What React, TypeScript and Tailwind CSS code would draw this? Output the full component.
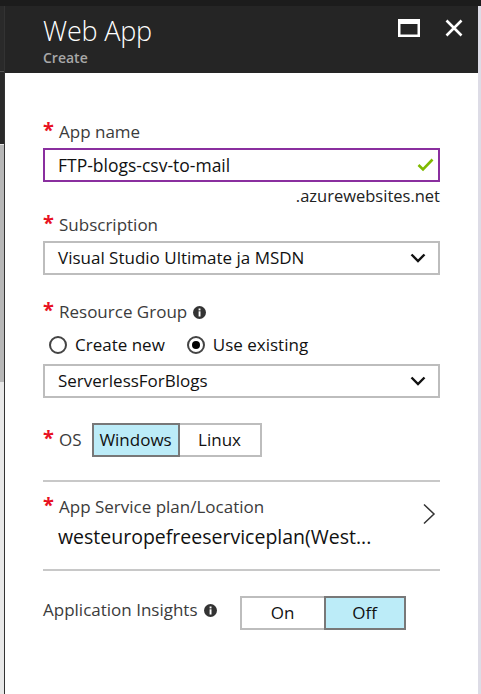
import React from "react";

const font = { fontFamily: '"Segoe UI", "Open Sans", "Noto Sans", sans-serif' };

function Star() {
  return (
    <span className="text-[#e81123] text-[20px] leading-none w-[16px] inline-block font-bold -mt-[4px]">*</span>
  );
}

function Chevron() {
  return (
    <svg width="16" height="10" viewBox="0 0 16 10" className="shrink-0">
      <polyline points="1.5,1.5 8,8 14.5,1.5" fill="none" stroke="#111" strokeWidth="2.4" />
    </svg>
  );
}

function Info() {
  return (
    <span className="inline-flex w-[13px] h-[13px] rounded-full bg-[#333] items-center justify-center shrink-0">
      <svg width="13" height="13" viewBox="0 0 13 13">
        <rect x="5.6" y="2.5" width="1.9" height="1.9" fill="#fff" />
        <rect x="5.6" y="5.3" width="1.9" height="5.2" fill="#fff" />
      </svg>
    </span>
  );
}

function Radio({ checked }: { checked?: boolean }) {
  return (
    <span className="w-[18px] h-[18px] rounded-full border-2 border-[#444] flex items-center justify-center shrink-0 bg-white">
      {checked && <span className="w-[8px] h-[8px] rounded-full bg-black" />}
    </span>
  );
}

export default function App() {
  return (
    <div className="w-[481px] h-[694px] bg-white flex flex-col overflow-hidden" style={font}>
      <div className="h-[6px] bg-[#1c1c1c] shrink-0" />
      <div className="flex flex-1">
        <div className="w-[5px] flex flex-col shrink-0 border-r border-[#333]">
          <div className="h-[66px] bg-[#2a2a2a] border-b border-[#555]" />
          <div className="h-[72px] bg-[#2a2a2a]" />
          <div className="h-[238px] bg-[#b7b7b7] border-t border-[#e8e8e8]" />
          <div className="flex-1 bg-[#e8e8e8]" />
        </div>
        <div className="flex-1 flex flex-col">
          <div className="h-[67px] bg-[#252525] pl-[38px] pr-[15px] flex items-start">
            <div className="flex-1 flex flex-col">
              <div className="text-white text-[27px] font-light leading-[26px] mt-[12px] tracking-[-0.2px]">Web App</div>
              <div className="text-[#a8a8a8] text-[14px] font-semibold leading-[18px] mt-[5px]">Create</div>
            </div>
            <div className="flex items-center gap-[25px] mt-[13px]">
              <svg width="22" height="18" viewBox="0 0 22 18">
                <rect x="1.25" y="1.25" width="19.5" height="15.5" fill="none" stroke="#fff" strokeWidth="2.5" />
                <rect x="1" y="1" width="20" height="4" fill="#fff" />
              </svg>
              <svg width="18" height="18" viewBox="0 0 18 18">
                <path d="M1.5 1.5 L16.5 16.5 M16.5 1.5 L1.5 16.5" stroke="#fff" strokeWidth="2.6" />
              </svg>
            </div>
          </div>

          <div className="flex flex-col px-[38px] pt-[47px]">
            <div className="h-[24px] flex items-center text-[17px] text-[#3b3b3b]">
              <Star />
              <span>App name</span>
            </div>
            <div className="mt-[4px] h-[34px] border-2 border-[#8a2f9f] flex items-center pl-[13px] pr-[4px] text-[17.5px] text-[#111]">
              <span className="flex-1">FTP-blogs-csv-to-mail</span>
              <svg width="17" height="14" viewBox="0 0 17 14">
                <polyline points="1.5,7 6,11.5 15.5,1.5" fill="none" stroke="#7fba00" strokeWidth="2.6" />
              </svg>
            </div>
            <div className="mt-[3px] h-[22px] text-right text-[16.5px] leading-[22px] text-[#222]">.azurewebsites.net</div>

            <div className="mt-[6px] h-[24px] flex items-center text-[17px] text-[#3b3b3b]">
              <Star />
              <span>Subscription</span>
            </div>
            <div className="mt-[4px] h-[34px] border-2 border-[#bdbdbd] flex items-center pl-[13px] pr-[12px] text-[17px] text-[#111]">
              <span className="flex-1">Visual Studio Ultimate ja MSDN</span>
              <Chevron />
            </div>

            <div className="mt-[25px] h-[24px] flex items-center text-[17px] text-[#3b3b3b]">
              <Star />
              <span>Resource Group</span>
              <span className="ml-[6px] flex"><Info /></span>
            </div>
            <div className="mt-[8px] h-[26px] flex items-center pl-[6px] text-[17px] text-[#111]">
              <Radio />
              <span className="ml-[8px]">Create new</span>
              <span className="ml-[22px] flex"><Radio checked /></span>
              <span className="ml-[8px]">Use existing</span>
            </div>
            <div className="mt-[6px] h-[34px] border-2 border-[#bdbdbd] flex items-center pl-[13px] pr-[12px] text-[17px] text-[#111]">
              <span className="flex-1">ServerlessForBlogs</span>
              <Chevron />
            </div>

            <div className="mt-[25px] h-[34px] flex items-center text-[17px]">
              <Star />
              <span className="text-[#3b3b3b]">OS</span>
              <div className="ml-[10px] flex h-[34px] text-[#111]">
                <div className="w-[88px] h-full border-2 border-[#787878] bg-[#bcecf8] flex items-center justify-center">Windows</div>
                <div className="w-[82px] h-full border-2 border-l-0 border-[#bdbdbd] flex items-center justify-center">Linux</div>
              </div>
            </div>

            <div className="mt-[23px] h-[2px] bg-[#c8c8c8]" />
            <div className="flex items-center">
              <div className="flex-1 flex flex-col">
                <div className="mt-[13px] h-[24px] flex items-center text-[17px] text-[#3b3b3b]">
                  <Star />
                  <span>App Service plan/Location</span>
                </div>
                <div className="mt-[4px] h-[28px] pl-[15px] text-[19.5px] leading-[28px] text-[#111]">westeuropefreeserviceplan(West...</div>
              </div>
              <svg width="14" height="22" viewBox="0 0 14 22" className="mr-[4px] -mt-[6px]">
                <polyline points="2,1.5 12,11 2,20.5" fill="none" stroke="#333" strokeWidth="1.5" />
              </svg>
            </div>
            <div className="mt-[18px] h-[2px] bg-[#c8c8c8]" />

            <div className="mt-[25px] h-[34px] flex items-center text-[17px]">
              <span className="text-[#3b3b3b] -mt-[6px]">Application Insights</span>
              <span className="ml-[6px] -mt-[6px] flex"><Info /></span>
              <div className="ml-[23px] flex h-[34px] text-[#111]">
                <div className="w-[84px] h-full border-2 border-r-0 border-[#bdbdbd] flex items-center justify-center">On</div>
                <div className="w-[82px] h-full border-2 border-[#787878] bg-[#bcecf8] flex items-center justify-center">Off</div>
              </div>
            </div>
          </div>
        </div>
        <div className="w-[3px] bg-[#dddce6] shrink-0" />
      </div>
    </div>
  );
}
